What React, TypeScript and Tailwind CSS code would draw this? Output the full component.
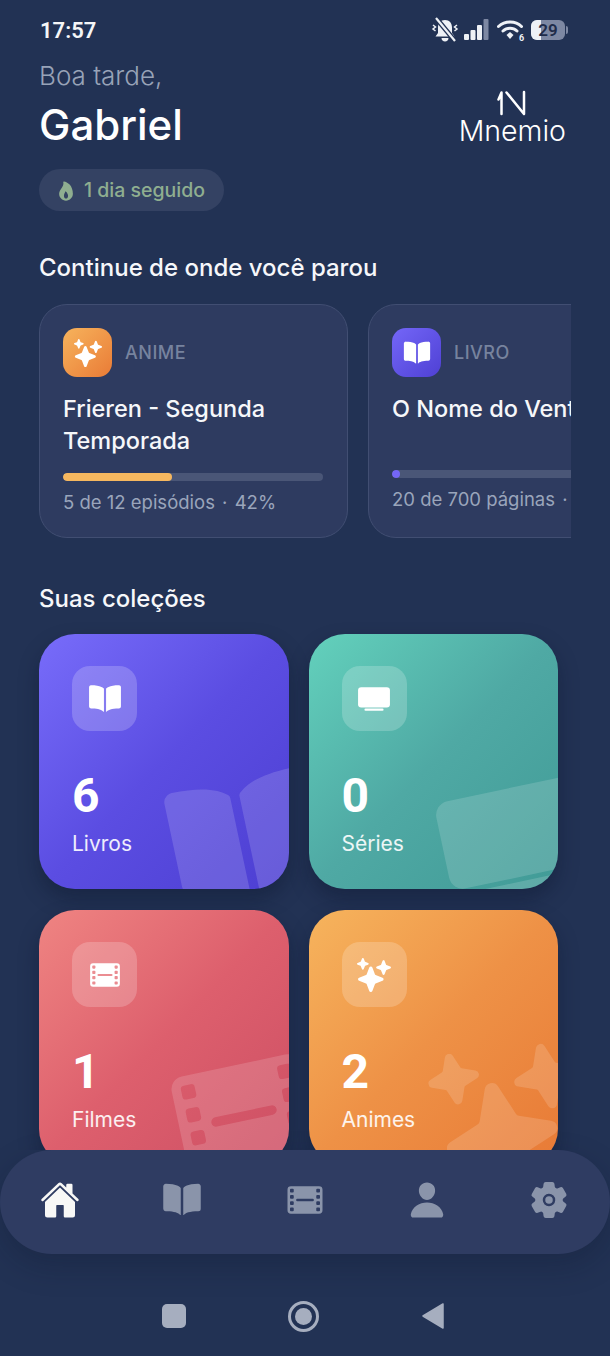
import type { ReactNode } from "react";
import { IoBook, IoFilm, IoFlame, IoHome, IoPerson, IoSettings, IoSparkles, IoTv } from "react-icons/io5";

const COLLECTIONS = [
  { count: "6", label: "Livros", Icon: IoBook, bg: "bg-gradient-to-br from-[#786cfa] via-[#5b4de2] to-[#4d3fd2]", deco: "-right-[30px] -bottom-[26px] -rotate-12" },
  { count: "0", label: "Séries", Icon: IoTv, bg: "bg-gradient-to-br from-[#63d1bc] via-[#4fa9a4] to-[#419b97]", deco: "-right-[30px] -bottom-[26px] -rotate-12" },
  { count: "1", label: "Filmes", Icon: IoFilm, bg: "bg-gradient-to-br from-[#ef8482] via-[#dd5f6d] to-[#cd4f64]", deco: "-right-[30px] -bottom-[26px] -rotate-12" },
  { count: "2", label: "Animes", Icon: IoSparkles, bg: "bg-gradient-to-br from-[#f6b45d] via-[#ee9146] to-[#e87a36]", deco: "-right-[29px] -bottom-[27px] -rotate-12" },
];

function StatusIcons() {
  return (
    <div className="flex items-center">
      {/* muted bell */}
      <svg width="28" height="26" viewBox="0 0 28 26" fill="#eef1f6" className="mr-[5px]">
        <path d="M14 3c-4.500 0-7 3-7 7.500V16l-2.500 3.500h19L21 16v-5.500C21 6 18.500 3 14 3z" />
        <path d="M10.500 21h7c0 2-1.500 3.500-3.500 3.500s-3.500-1.500-3.500-3.500z" />
        <path d="M5 1l19 23" stroke="#223254" strokeWidth="5" />
        <path d="M5 1l19 23" stroke="#eef1f6" strokeWidth="2.200" />
        <path d="M2 8l2.500 2-2.500 2 2.500 2M26 8l-2.500 2 2.500 2-2.500 2" stroke="#eef1f6" strokeWidth="1.500" fill="none" />
      </svg>
      <svg width="25" height="24" viewBox="0 0 25 24" className="mr-[8px]">
        <rect x="0" y="16" width="5" height="6" rx="1" fill="#eef1f6" />
        <rect x="6.500" y="12" width="5" height="10" rx="1" fill="#eef1f6" />
        <rect x="13" y="7" width="5" height="15" rx="1" fill="#eef1f6" />
        <rect x="19.500" y="1" width="5" height="21" rx="1" fill="#7d88a3" />
      </svg>
      <svg width="29" height="24" viewBox="0 0 29 24" className="mr-[5px]">
        <path d="M1.500 8.500c6.500-6 17-6 23 0" fill="none" stroke="#eef1f6" strokeWidth="3" strokeLinecap="round" />
        <path d="M6 13c4-3.700 10-3.700 14 0" fill="none" stroke="#eef1f6" strokeWidth="3" strokeLinecap="round" />
        <path d="M9.500 17l3.500-3 3.500 3-3.500 4z" fill="#eef1f6" />
        <text x="22" y="23" fontSize="9" fontWeight="700" fill="#eef1f6" fontFamily="Roboto, sans-serif">6</text>
      </svg>
      <div className="relative flex h-[20px] w-[34px] items-center justify-center overflow-hidden rounded-[6px] bg-[#7d88a3]">
        <div className="absolute inset-y-0 left-0 w-[10px] bg-[#eef1f6]" />
        <span className="relative text-[17px] leading-none font-semibold text-[#1f2c4a] [font-family:Roboto,sans-serif]">29</span>
      </div>
      <div className="ml-px h-[8px] w-[2px] rounded-r-sm bg-[#7d88a3]" />
    </div>
  );
}

function Logo() {
  return (
    <div className="flex flex-col items-center">
      <svg width="30" height="26" viewBox="0 0 30 26" fill="none" stroke="#ffffff" strokeWidth="2.500" strokeLinecap="round" strokeLinejoin="round">
        <path d="M1.500 9.500L4.500 2.500V24" />
        <path d="M9.500 2.500L27 24V2" />
      </svg>
      <span className="text-[28.500px] leading-[30px] font-light text-white">Mnemio</span>
    </div>
  );
}

function ProgressCard({
  kind, icon, iconBg, title, meta, pct, barColor, barClass,
}: {
  kind: string;
  icon: ReactNode;
  iconBg: string;
  title: ReactNode;
  meta: ReactNode;
  pct: string;
  barColor: string;
  barClass: string;
}) {
  return (
    <div className="h-[234px] w-[309px] shrink-0 rounded-[28px] border border-[#414e72] bg-[#2e3b60] px-[23px] pt-[23px]">
      <div className="flex items-center gap-[13px]">
        <div className={`flex h-[49px] w-[49px] items-center justify-center rounded-[14px] ${iconBg}`}>{icon}</div>
        <span className="text-[18px] font-medium tracking-[0.5px] text-[#77839e]">{kind}</span>
      </div>
      <div className="mt-[16px] h-[64px] text-[23.500px] leading-[32px] font-medium whitespace-nowrap text-[#f6f7fa]">{title}</div>
      <div className={`h-[8px] w-[260px] overflow-hidden rounded-full bg-[#4a5677] ${barClass}`}>
        <div className={`h-full rounded-full ${barColor}`} style={{ width: pct }} />
      </div>
      <div className="mt-[7px] text-[18.500px] leading-[28px] whitespace-nowrap text-[#9aa5bb]">{meta}</div>
    </div>
  );
}

export default function App() {
  return (
    <div className="flex h-[1356px] w-[610px] flex-col overflow-hidden bg-[#223254] text-white [font-family:Inter,sans-serif]">
      <main className="h-[1150px] shrink-0 overflow-hidden">
        {/* Status bar */}
        <div className="flex h-[60px] items-center justify-between pr-[42px] pl-[40px]">
          <span className="text-[22px] font-semibold text-[#f5f6f8] [font-family:Roboto,sans-serif]">17:57</span>
          <StatusIcons />
        </div>

        {/* Greeting */}
        <div className="flex items-start justify-between pr-[44px] pl-[39px]">
          <div>
            <div className="text-[26px] leading-[32px] font-light text-[#98a3b8]">Boa tarde,</div>
            <div className="mt-[8px] text-[42px] leading-[50px] font-medium text-white">Gabriel</div>
          </div>
          <div className="pt-[30px]">
            <Logo />
          </div>
        </div>

        <div className="mt-[19px] ml-[39px] flex h-[42px] w-[185px] items-center gap-[7px] rounded-full bg-[#344263] pt-[1px] pl-[16px]">
          <IoFlame size={22} className="text-[#8fae90]" />
          <span className="pt-[1px] text-[19.500px] font-medium text-[#8fae90]">1 dia seguido</span>
        </div>

        {/* Continue */}
        <h2 className="mt-[42px] ml-[39px] text-[24px] leading-[30px] font-medium text-[#f6f7fa]">Continue de onde você parou</h2>
        <div className="mt-[21px] ml-[39px] flex w-[532px] gap-[20px] overflow-hidden">
          <ProgressCard
            kind="ANIME"
            icon={<IoSparkles size={28} color="#fff" />}
            iconBg="bg-gradient-to-br from-[#f6b35c] to-[#e97b36]"
            title={<>Frieren - Segunda<br />Temporada</>}
            meta={<>5 de 12 episódios <span className="mx-[2px]">·</span> 42%</>}
            pct="42%"
            barColor="bg-[#f6b75f]"
            barClass="mt-[16px]"
          />
          <ProgressCard
            kind="LIVRO"
            icon={<IoBook size={28} color="#fff" />}
            iconBg="bg-gradient-to-br from-[#7466f8] to-[#4f40d4]"
            title="O Nome do Vento"
            meta={<>20 de 700 páginas <span className="mx-[2px]">·</span> 3%</>}
            pct="3%"
            barColor="bg-[#7466f8]"
            barClass="mt-[13px]"
          />
        </div>

        {/* Collections */}
        <h2 className="mt-[46px] ml-[39px] text-[24px] leading-[30px] font-medium text-[#f6f7fa]">Suas coleções</h2>
        <div className="mt-[20px] ml-[39px] grid w-[519px] grid-cols-2 gap-x-[20px] gap-y-[21px]">
          {COLLECTIONS.map(({ count, label, Icon, bg, deco }) => (
            <div key={label} className={`relative h-[255px] overflow-hidden rounded-[36px] pt-[32px] pl-[33px] shadow-[0_10px_20px_rgba(10,18,40,0.35)] ${bg}`}>
              <div className={`absolute text-white/15 ${deco}`}>
                <Icon size={150} />
              </div>
              <div className="flex h-[65px] w-[65px] items-center justify-center rounded-[18px] bg-white/20">
                <Icon size={34} color="#fff" />
              </div>
              <div className="mt-[36px] text-[48px] leading-[58px] font-bold text-white [font-family:Roboto,sans-serif]">{count}</div>
              <div className="mt-[4px] text-[21px] leading-[30px] text-white/90">{label}</div>
            </div>
          ))}
        </div>
      </main>

      {/* Tab bar */}
      <nav className="flex h-[104px] shrink-0 items-center justify-between rounded-[52px] bg-[#2f3c62] pr-[41px] pb-[4px] pl-[40px] shadow-[0_12px_30px_rgba(10,18,40,0.25)]">
        <IoHome size={40} color="#f8f8f6" />
        <IoBook size={40} color="#8a94aa" />
        <IoFilm size={40} color="#8a94aa" />
        <IoPerson size={40} color="#8a94aa" />
        <IoSettings size={40} color="#8a94aa" />
      </nav>

      {/* Android nav */}
      <div className="flex flex-1 items-center justify-center gap-[102px] pt-[22px] pr-[4px]">
        <div className="h-[24px] w-[24px] rounded-[5px] bg-[#a6aebf]" />
        <div className="flex h-[31px] w-[31px] items-center justify-center rounded-full border-[3px] border-[#a6aebf]">
          <div className="h-[17px] w-[17px] rounded-full bg-[#a6aebf]" />
        </div>
        <svg width="24" height="28" viewBox="0 0 24 28">
          <path d="M22 2v24L2 14z" fill="#a6aebf" stroke="#a6aebf" strokeWidth="1.500" strokeLinejoin="round" />
        </svg>
      </div>
    </div>
  );
}
